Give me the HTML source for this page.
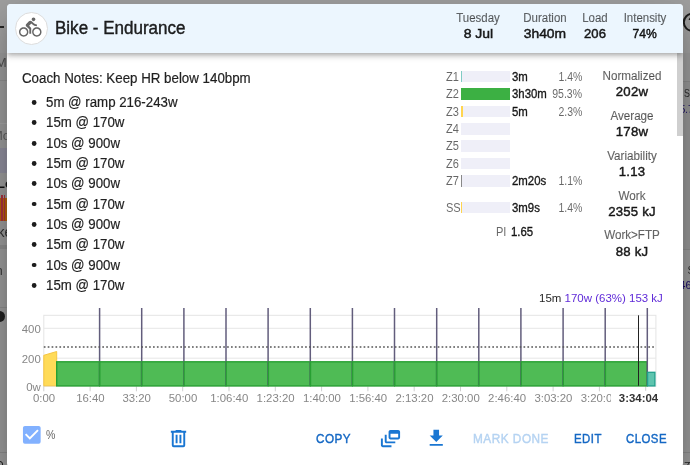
<!DOCTYPE html>
<html lang="en">
<head>
<meta charset="utf-8">
<title>Bike - Endurance</title>
<style>
*{box-sizing:border-box;margin:0;padding:0}
html,body{width:690px;height:465px;overflow:hidden}
body{position:relative;background:#999;font-family:"Liberation Sans",Arial,sans-serif;color:rgba(0,0,0,.87);font-size:14px}
.abs{position:absolute}
/* dimmed page behind */
.bg{position:absolute;left:0;top:0;width:690px;height:465px;overflow:hidden;will-change:transform}
.bg div,.bg span{position:absolute}
/* dialog */
#dlg{will-change:transform;position:absolute;left:7px;top:4px;width:676px;height:462.5px;background:#fff;border-radius:4px;box-shadow:0 11px 15px -7px rgba(0,0,0,.2),0 24px 38px 3px rgba(0,0,0,.14),0 9px 46px 8px rgba(0,0,0,.12);overflow:hidden}
#hdr{position:absolute;left:0;top:0;width:676px;height:49px;background:#ecf6fe;box-shadow:0 2px 4px -1px rgba(0,0,0,.2),0 4px 5px 0 rgba(0,0,0,.12),0 1px 10px 0 rgba(0,0,0,.1);z-index:3}
#avatar{position:absolute;left:8px;top:7.9px;width:33.4px;height:33.4px;border-radius:50%;background:#fff;border:1px solid #ddd}
#avatar svg{position:absolute;left:3.2px;top:3px;width:22.5px;height:22.5px;fill:#666}
#title{position:absolute;left:48px;top:12px;font-size:18px;line-height:24px;white-space:nowrap;-webkit-text-stroke:.4px rgba(0,0,0,.87);transform:scaleX(.945);transform-origin:0 0}
.hs{position:absolute;top:6px;text-align:center;white-space:nowrap;width:80px;transform:scaleX(.955)}
.hs .l{font-size:12px;line-height:16px;color:rgba(0,0,0,.6);display:block;position:relative;top:-.2px;-webkit-text-stroke:.15px rgba(0,0,0,.6)}
.hs .v{font-size:13.7px;line-height:16px;display:block;-webkit-text-stroke:.5px rgba(0,0,0,.87)}
.hs .v i{font-style:normal;display:inline-block;transform:scaleX(.93)}
.med{-webkit-text-stroke:.3px currentColor}
#notes{position:absolute;left:15px;top:64px;font-size:14px;line-height:20px;white-space:nowrap;-webkit-text-stroke:.2px rgba(0,0,0,.87);transform:scaleX(.951);transform-origin:0 0}
#steps{position:absolute;left:38.5px;top:88px;list-style:none;font-size:14px;line-height:20.32px;white-space:nowrap;-webkit-text-stroke:.2px rgba(0,0,0,.87)}
#steps li{position:relative;height:20.32px;transform:scaleX(.948);transform-origin:0 0}
#steps li::before{content:"";position:absolute;left:-14.7px;top:8.1px;width:4.8px;height:4.8px;border-radius:50%;background:#1d1d1d}
.zr{position:absolute;left:438px;width:140px;height:17px;font-size:12px;line-height:17px;white-space:nowrap}
.zr .n{position:absolute;left:1px;top:.9px;color:rgba(0,0,0,.6);transform:scaleX(.92);transform-origin:0 0}
.zr .b{position:absolute;left:16.3px;top:2.8px;width:48.7px;height:11.6px;background:#efeff8}
.zr .b i{position:absolute;left:0;top:0;height:11.6px;display:block}
.zr .t{position:absolute;left:67px;top:.9px;-webkit-text-stroke:.35px rgba(0,0,0,.87);transform:scaleX(.95);transform-origin:0 0}
.zr .p{position:absolute;right:2.6px;top:.9px;color:rgba(0,0,0,.6);transform:scaleX(.875);transform-origin:100% 0}
.st{position:absolute;left:585px;width:80px;margin-top:.1px;text-align:center;white-space:nowrap;transform:scaleX(.97)}
.st .l{display:block;font-size:12px;line-height:16px;color:rgba(0,0,0,.6);-webkit-text-stroke:.15px rgba(0,0,0,.6)}
.st .v{display:block;font-size:13.6px;line-height:17px;margin-top:-.7px;letter-spacing:.2px;-webkit-text-stroke:.45px rgba(0,0,0,.87)}
#tip{position:absolute;right:20.3px;top:286.3px;font-size:11.4px;line-height:16px;white-space:nowrap;transform:scaleX(1.008);transform-origin:100% 0}
#tip b{font-weight:normal;color:#5f2ad8}
#chart{position:absolute;left:0;top:296px;width:676px;height:110px}
#chart text{font-family:"Liberation Sans",Arial,sans-serif;font-size:11.4px;fill:#878787}
.btn{position:absolute;top:425.6px;font-size:12px;line-height:18px;color:#1568c4;letter-spacing:.5px;white-space:nowrap;-webkit-text-stroke:.4px currentColor;transform:scaleX(.95);transform-origin:0 0}
.ic{position:absolute;width:23px;height:23px;fill:#1976d2}
#sb{position:absolute;left:670px;top:49px;width:6px;height:83px;background:#cfcfcf}
</style>
</head>
<body>
<div class="bg">
  <div style="left:0;top:0;width:690px;height:465px;background:#9b9b9b"></div>
  <div style="left:0;top:0;width:690px;height:53px;background:#a0a0a0"></div>
  <!-- left sliver of the dimmed page -->
  <div style="left:0;top:26.2px;width:4.2px;height:1.7px;background:#262626"></div>
  <span style="left:-4.6px;top:55.6px;font-size:13.5px;line-height:14px;color:#505050">M</span>
  <div style="left:0;top:80px;width:8px;height:1px;background:#8e8e8e"></div>
  <div style="left:0;top:122.5px;width:8px;height:1px;background:#a4a4a4"></div>
  <span style="left:-8px;top:128.5px;font-size:13px;line-height:14px;color:#5c5c5c">Mo</span>
  <div style="left:0;top:148.3px;width:8px;height:25.2px;background:#8f8e9d"></div>
  <span style="left:-3px;top:176.5px;font-size:13px;line-height:14px;font-weight:bold;color:#111">Lo</span>
  <div style="left:0;top:197.6px;width:8px;height:23.2px;background:#b8640a"></div>
  <div style="left:1px;top:195.2px;width:1.5px;height:25.6px;background:#a8323f"></div>
  <div style="left:3.7px;top:195.2px;width:1.7px;height:25.6px;background:#a8323f"></div>
  <span style="left:-2.6px;top:224.6px;font-size:14px;line-height:14px;color:#2e2e2e">ke</span>
  <div style="left:0;top:244.5px;width:8px;height:4.5px;background:#8d8d8d"></div>
  <span style="left:-4.6px;top:263.7px;font-size:13px;line-height:14px;color:#3a3a3a">n</span>
  <div style="left:0;top:307px;width:8px;height:1px;background:#8c8c8c"></div>
  <div style="left:-6.6px;top:310.8px;width:11.4px;height:11.4px;border-radius:50%;background:#1f1f1f"></div>
  <div style="left:0;top:452px;width:8px;height:1px;background:#8a8a8a"></div>
  <div style="left:-4px;top:461px;width:6.5px;height:8px;border-radius:3px;border:1.6px solid #1a1a1a"></div>
  <!-- right sliver -->
  <svg style="position:absolute;left:680px;top:10px;width:10px;height:26px;overflow:visible" viewBox="0 0 10 26"><circle cx="12.4" cy="12.3" r="8.6" fill="none" stroke="#1c1c1c" stroke-width="2"/><text x="8" y="17.4" font-size="14" font-weight="bold" fill="#1c1c1c" font-family="Liberation Sans, Arial, sans-serif">?</text></svg>
  <div style="left:682px;top:80.5px;width:8px;height:1px;background:#8b8b8b"></div>
  <div style="left:682px;top:81.500px;width:8px;height:168px;background:#969696"></div>
  <span style="left:683.6px;top:87.1px;font-size:10.4px;line-height:14px;color:#2c2c2c;transform:scaleX(.85);transform-origin:0 0">SS</span>
  <span style="left:680.2px;top:101.6px;font-size:10.6px;line-height:14px;color:#1a0d66;transform:scaleX(.9);transform-origin:0 0">5.7</span>
  <div style="left:682px;top:249px;width:8px;height:1px;background:#8b8b8b"></div>
  <span style="left:687.4px;top:263.5px;font-size:10.4px;line-height:14px;color:#2c2c2c">SS</span>
  <span style="left:679.6px;top:278.2px;font-size:10.6px;line-height:14px;color:#1a0d66">46</span>
  <div style="left:682px;top:452px;width:8px;height:1px;background:#8a8a8a"></div>
  <span style="left:683.5px;top:459.5px;font-size:11px;line-height:12px;color:#222;font-style:italic">7</span>
</div>

<div id="dlg">
  <div id="hdr">
    <div id="avatar"><svg viewBox="0 0 24 24"><path d="M15.5 5.5c1.1 0 2-.9 2-2s-.9-2-2-2-2 .9-2 2 .9 2 2 2zM5 12c-2.800 0-5 2.200-5 5s2.200 5 5 5 5-2.200 5-5-2.200-5-5-5zm0 8.500c-1.900 0-3.500-1.600-3.500-3.500s1.600-3.500 3.500-3.500 3.500 1.600 3.500 3.500-1.600 3.500-3.500 3.500zm5.800-10l2.400-2.400.8.800c1.300 1.300 3 2.100 5.100 2.100V9c-1.500 0-2.700-.6-3.600-1.500l-1.900-1.900c-.5-.4-1-.6-1.600-.6s-1.100.2-1.400.6L7.800 8.400c-.4.400-.6.900-.6 1.400 0 .6.200 1.100.6 1.400L11 14v5h2v-6.200l-2.200-2.300zM19 12c-2.800 0-5 2.200-5 5s2.200 5 5 5 5-2.200 5-5-2.200-5-5-5zm0 8.500c-1.900 0-3.500-1.600-3.500-3.500s1.600-3.500 3.500-3.500 3.500 1.600 3.500 3.500-1.600 3.500-3.500 3.500z"/></svg></div>
    <div id="title">Bike - Endurance</div>
    <div class="hs" style="left:431px"><span class="l">Tuesday</span><span class="v"><i style="transform:scaleX(1.07)">8 Jul</i></span></div>
    <div class="hs" style="left:497.7px"><span class="l">Duration</span><span class="v"><i style="transform:scaleX(1.06)">3h40m</i></span></div>
    <div class="hs" style="left:548px"><span class="l">Load</span><span class="v">206</span></div>
    <div class="hs" style="left:598px"><span class="l">Intensity</span><span class="v"><i>74%</i></span></div>
  </div>

  <div id="notes">Coach Notes: Keep HR below 140bpm</div>
  <ul id="steps">
    <li>5m @ ramp 216-243w</li>
    <li>15m @ 170w</li>
    <li>10s @ 900w</li>
    <li>15m @ 170w</li>
    <li>10s @ 900w</li>
    <li>15m @ 170w</li>
    <li>10s @ 900w</li>
    <li>15m @ 170w</li>
    <li>10s @ 900w</li>
    <li>15m @ 170w</li>
  </ul>

  <div class="zr" style="top:64px"><span class="n">Z1</span><span class="b"><i style="width:1px;background:#80cbc4"></i></span><span class="t">3m</span><span class="p">1.4%</span></div>
  <div class="zr" style="top:81.4px"><span class="n">Z2</span><span class="b"><i style="width:49px;background:#3cb043"></i></span><span class="t">3h30m</span><span class="p">95.3%</span></div>
  <div class="zr" style="top:98.8px"><span class="n">Z3</span><span class="b"><i style="width:1.5px;background:#ffd54f"></i></span><span class="t">5m</span><span class="p">2.3%</span></div>
  <div class="zr" style="top:116.2px"><span class="n">Z4</span><span class="b"></span></div>
  <div class="zr" style="top:133.6px"><span class="n">Z5</span><span class="b"></span></div>
  <div class="zr" style="top:151px"><span class="n">Z6</span><span class="b"></span></div>
  <div class="zr" style="top:168.4px"><span class="n">Z7</span><span class="b"><i style="width:1px;background:#888"></i></span><span class="t">2m20s</span><span class="p">1.1%</span></div>
  <div class="zr" style="top:195px"><span class="n">SS</span><span class="b"><i style="width:1px;background:#ffd54f"></i></span><span class="t">3m9s</span><span class="p">1.4%</span></div>
  <div class="zr" style="top:219px"><span class="n" style="left:51px">PI</span><span class="t" style="left:66px">1.65</span></div>

  <div class="st" style="top:64px"><span class="l">Normalized</span><span class="v">202w</span></div>
  <div class="st" style="top:103.9px"><span class="l">Average</span><span class="v">178w</span></div>
  <div class="st" style="top:143.8px"><span class="l">Variability</span><span class="v">1.13</span></div>
  <div class="st" style="top:183.6px"><span class="l">Work</span><span class="v">2355 kJ</span></div>
  <div class="st" style="top:223.2px"><span class="l">Work&gt;FTP</span><span class="v">88 kJ</span></div>

  <div id="sb"></div>

  <div id="tip">15m <b>170w (63%) 153 kJ</b></div>

  <svg id="chart" viewBox="0 0 676 110">
    <rect x="36.8" y="15.3" width="612.1" height="71.0" fill="#fff" stroke="#e4e4e4" stroke-width="1"/>
    <line x1="36.8" x2="648.9" y1="58.2" y2="58.2" stroke="#e6e6e6" stroke-width="1"/>
    <line x1="36.8" x2="648.9" y1="28.3" y2="28.3" stroke="#e6e6e6" stroke-width="1"/>
    <line x1="36.8" x2="36.8" y1="85.8" y2="91.3" stroke="#cfcfcf" stroke-width="1"/>
    <line x1="83.1" x2="83.1" y1="85.8" y2="91.3" stroke="#cfcfcf" stroke-width="1"/>
    <line x1="129.4" x2="129.4" y1="85.8" y2="91.3" stroke="#cfcfcf" stroke-width="1"/>
    <line x1="175.7" x2="175.7" y1="85.8" y2="91.3" stroke="#cfcfcf" stroke-width="1"/>
    <line x1="222.0" x2="222.0" y1="85.8" y2="91.3" stroke="#cfcfcf" stroke-width="1"/>
    <line x1="268.3" x2="268.3" y1="85.8" y2="91.3" stroke="#cfcfcf" stroke-width="1"/>
    <line x1="314.6" x2="314.6" y1="85.8" y2="91.3" stroke="#cfcfcf" stroke-width="1"/>
    <line x1="360.9" x2="360.9" y1="85.8" y2="91.3" stroke="#cfcfcf" stroke-width="1"/>
    <line x1="407.2" x2="407.2" y1="85.8" y2="91.3" stroke="#cfcfcf" stroke-width="1"/>
    <line x1="453.5" x2="453.5" y1="85.8" y2="91.3" stroke="#cfcfcf" stroke-width="1"/>
    <line x1="499.8" x2="499.8" y1="85.8" y2="91.3" stroke="#cfcfcf" stroke-width="1"/>
    <line x1="546.1" x2="546.1" y1="85.8" y2="91.3" stroke="#cfcfcf" stroke-width="1"/>
    <line x1="592.4" x2="592.4" y1="85.8" y2="91.3" stroke="#cfcfcf" stroke-width="1"/>
    <line x1="638.7" x2="638.7" y1="85.8" y2="91.3" stroke="#cfcfcf" stroke-width="1"/>
    <polygon points="36.8,85.8 36.8,55.3 49.7,51.5 49.7,85.8" fill="#ffdb58" stroke="#f5c542" stroke-width="1"/>
    <rect x="49.7" y="61.8" width="42.7" height="24.1" fill="#4fbb55" stroke="#27a032" stroke-width="1.4"/>
    <line x1="92.6" x2="92.6" y1="8" y2="85.8" stroke="#625d7c" stroke-width="1.5"/>
    <rect x="92.8" y="61.8" width="41.7" height="24.1" fill="#4fbb55" stroke="#27a032" stroke-width="1.4"/>
    <line x1="134.7" x2="134.7" y1="8" y2="85.8" stroke="#625d7c" stroke-width="1.5"/>
    <rect x="135.0" y="61.8" width="41.7" height="24.1" fill="#4fbb55" stroke="#27a032" stroke-width="1.4"/>
    <line x1="176.9" x2="176.9" y1="8" y2="85.8" stroke="#625d7c" stroke-width="1.5"/>
    <rect x="177.1" y="61.8" width="41.7" height="24.1" fill="#4fbb55" stroke="#27a032" stroke-width="1.4"/>
    <line x1="219.0" x2="219.0" y1="8" y2="85.8" stroke="#625d7c" stroke-width="1.5"/>
    <rect x="219.2" y="61.8" width="41.7" height="24.1" fill="#4fbb55" stroke="#27a032" stroke-width="1.4"/>
    <line x1="261.1" x2="261.1" y1="8" y2="85.8" stroke="#625d7c" stroke-width="1.5"/>
    <rect x="261.4" y="61.8" width="41.7" height="24.1" fill="#4fbb55" stroke="#27a032" stroke-width="1.4"/>
    <line x1="303.3" x2="303.3" y1="8" y2="85.8" stroke="#625d7c" stroke-width="1.5"/>
    <rect x="303.5" y="61.8" width="41.7" height="24.1" fill="#4fbb55" stroke="#27a032" stroke-width="1.4"/>
    <line x1="345.4" x2="345.4" y1="8" y2="85.8" stroke="#625d7c" stroke-width="1.5"/>
    <rect x="345.6" y="61.8" width="41.7" height="24.1" fill="#4fbb55" stroke="#27a032" stroke-width="1.4"/>
    <line x1="387.5" x2="387.5" y1="8" y2="85.8" stroke="#625d7c" stroke-width="1.5"/>
    <rect x="387.8" y="61.8" width="41.7" height="24.1" fill="#4fbb55" stroke="#27a032" stroke-width="1.4"/>
    <line x1="429.7" x2="429.7" y1="8" y2="85.8" stroke="#625d7c" stroke-width="1.5"/>
    <rect x="429.9" y="61.8" width="41.7" height="24.1" fill="#4fbb55" stroke="#27a032" stroke-width="1.4"/>
    <line x1="471.8" x2="471.8" y1="8" y2="85.8" stroke="#625d7c" stroke-width="1.5"/>
    <rect x="472.0" y="61.8" width="41.7" height="24.1" fill="#4fbb55" stroke="#27a032" stroke-width="1.4"/>
    <line x1="513.9" x2="513.9" y1="8" y2="85.8" stroke="#625d7c" stroke-width="1.5"/>
    <rect x="514.2" y="61.8" width="41.7" height="24.1" fill="#4fbb55" stroke="#27a032" stroke-width="1.4"/>
    <line x1="556.1" x2="556.1" y1="8" y2="85.8" stroke="#625d7c" stroke-width="1.5"/>
    <rect x="556.3" y="61.8" width="41.7" height="24.1" fill="#4fbb55" stroke="#27a032" stroke-width="1.4"/>
    <line x1="598.2" x2="598.2" y1="8" y2="85.8" stroke="#625d7c" stroke-width="1.5"/>
    <rect x="598.4" y="61.8" width="41.7" height="24.1" fill="#4fbb55" stroke="#27a032" stroke-width="1.4"/>
    <line x1="640.3" x2="640.3" y1="8" y2="85.8" stroke="#625d7c" stroke-width="1.5"/>
    <rect x="640.6" y="72.3" width="7.3" height="13.6" fill="#5ec4ae" stroke="#22a08c" stroke-width="1.3"/>
    <line x1="36.8" x2="648.9" y1="47" y2="47" stroke="#555" stroke-width="1.7" stroke-dasharray="1.7 2.2"/>
    <line x1="631.5" x2="631.5" y1="15.3" y2="85.8" stroke="#222" stroke-width="1"/>
    <text x="33.8" y="90.6" text-anchor="end">0w</text>
    <text x="33.8" y="62.5" text-anchor="end">200</text>
    <text x="33.8" y="32.6" text-anchor="end">400</text>
    <text x="37.1" y="102.3" text-anchor="middle">0:00</text>
    <text x="83.4" y="102.3" text-anchor="middle">16:40</text>
    <text x="129.7" y="102.3" text-anchor="middle">33:20</text>
    <text x="176.0" y="102.3" text-anchor="middle">50:00</text>
    <text x="222.3" y="102.3" text-anchor="middle">1:06:40</text>
    <text x="268.6" y="102.3" text-anchor="middle">1:23:20</text>
    <text x="314.9" y="102.3" text-anchor="middle">1:40:00</text>
    <text x="361.2" y="102.3" text-anchor="middle">1:56:40</text>
    <text x="407.5" y="102.3" text-anchor="middle">2:13:20</text>
    <text x="453.8" y="102.3" text-anchor="middle">2:30:00</text>
    <text x="500.1" y="102.3" text-anchor="middle">2:46:40</text>
    <text x="546.4" y="102.3" text-anchor="middle">3:03:20</text>
    <text x="592.7" y="102.3" text-anchor="middle">3:20:00</text>
    <rect x="604.0" y="90.8" width="55" height="16" fill="#fff"/>
    <text x="631.5" y="102.3" text-anchor="middle" font-weight="bold" style="fill:#333">3:34:04</text>
  </svg>

  <svg class="ic" style="left:13.1px;top:419.3px;width:23.6px;height:23.6px;fill:#82b1ff" viewBox="0 0 24 24"><path d="M10,17L5,12L6.41,10.58L10,14.17L17.59,6.58L19,8M19,3H5C3.89,3 3,3.89 3,5V19A2,2 0 0,0 5,21H19A2,2 0 0,0 21,19V5C21,3.890 20.100,3 19,3Z"/></svg>
  <div class="abs" style="left:38.6px;top:423.3px;font-size:13px;line-height:16px;color:rgba(0,0,0,.64);transform:scaleX(.81);transform-origin:0 0">%</div>
  <svg class="ic" style="left:159.5px;top:422.9px" viewBox="0 0 24 24"><path d="M9,3V4H4V6H5V19A2,2 0 0,0 7,21H17A2,2 0 0,0 19,19V6H20V4H15V3H9M7,6H17V19H7V6M9,8V17H11V8H9M13,8V17H15V8H13Z"/></svg>
  <div class="btn" style="left:308.6px;transform:scaleX(.975)">COPY</div>
  <svg class="ic" style="left:371.8px;top:422.9px" viewBox="0 0 24 24"><path d="M8 8H6v7c0 1.100.9 2 2 2h9v-2H8V8z"/><path d="M20 3h-8c-1.100 0-2 .9-2 2v6c0 1.100.9 2 2 2h8c1.100 0 2-.9 2-2V5c0-1.100-.9-2-2-2zm0 8h-8V7h8v4zM4 12H2v7c0 1.100.9 2 2 2h9v-2H4v-7z"/></svg>
  <svg class="ic" style="left:418.3px;top:423px;width:22.5px;height:22.5px" viewBox="0 0 24 24"><path d="M5,20H19V18H5M19,9H15V3H9V9H5L12,16L19,9Z"/></svg>
  <div class="btn" style="left:466px;color:#b5d3f2;transform:scaleX(.984)">MARK DONE</div>
  <div class="btn" style="left:567px">EDIT</div>
  <div class="btn" style="left:619.4px">CLOSE</div>
</div>
</body>
</html>
